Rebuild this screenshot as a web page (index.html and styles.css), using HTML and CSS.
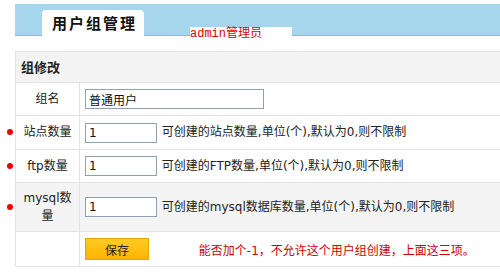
FILE: index.html
```html
<!DOCTYPE html>
<html lang="zh-CN">
<head>
    <meta charset="UTF-8">
    <title>用户组管理</title>
    <link rel="stylesheet" href="styles.css">
</head>
<body>
    <div class="topbar">
        <div class="tab">用户组管理</div>
        <div class="who">admin管理员</div>
    </div>

    <table class="form-table">
        <tr class="head">
            <th colspan="2">组修改</th>
        </tr>
        <tr>
            <td class="label">组名</td>
            <td class="field"><input type="text" class="txt wide" value="普通用户"></td>
        </tr>
        <tr>
            <td class="label req">站点数量</td>
            <td class="field"><input type="text" class="txt" value="1"> 可创建的站点数量,单位(个),默认为0,则不限制</td>
        </tr>
        <tr>
            <td class="label req">ftp数量</td>
            <td class="field"><input type="text" class="txt" value="1"> 可创建的FTP数量,单位(个),默认为0,则不限制</td>
        </tr>
        <tr class="hover">
            <td class="label req">mysql数量</td>
            <td class="field"><input type="text" class="txt" value="1"> 可创建的mysql数据库数量,单位(个),默认为0,则不限制</td>
        </tr>
        <tr>
            <td class="label"></td>
            <td class="field">
                <button class="btn">保存</button>
                <span class="note">能否加个-1，不允许这个用户组创建，上面这三项。</span>
            </td>
        </tr>
    </table>
</body>
</html>
```

FILE: styles.css
```css
html, body {
    overflow: hidden;
}
body {
    margin: 0;
    font-family: "DejaVu Sans", "Noto Sans CJK SC", sans-serif;
    font-size: 12px;
    color: #222;
    background: #fff;
}
.topbar {
    margin: 4px 0 0 15px;
    height: 31px;
    background: #a6d6ec;
    border-bottom: 1px solid #86bfd9;
    display: flex;
    align-items: flex-end;
    padding-left: 27px;
}
.tab {
    width: 102px;
    height: 26px;
    margin-bottom: -1px;
    background: #fff;
    border-radius: 4px 4px 0 0;
    font-family: "Noto Sans CJK SC", sans-serif;
    font-size: 15px;
    font-weight: bold;
    letter-spacing: 2px;
    line-height: 26px;
    text-indent: 10px;
    color: #111;
}
.who {
    width: 102px;
    height: 9px;
    margin: 0 0 -1px 46px;
    padding-top: 1px;
    box-sizing: border-box;
    background: #fff;
    color: #d00;
    font-family: "Liberation Mono", "Noto Sans CJK SC", monospace;
    font-size: 12px;
    line-height: 12px;
    white-space: nowrap;
}
.form-table {
    margin: 15px 0 0 15px;
    width: calc(100% - 15px);
    border-collapse: collapse;
}
.form-table th, .form-table td {
    border: 1px solid #e3e3e3;
}
.form-table th, .form-table .field {
    border-right: 0;
}
.head th {
    background: #f3f3f3;
    text-align: left;
    font-family: "Noto Sans CJK SC", sans-serif;
    font-size: 13px;
    font-weight: bold;
    padding: 7px 5px;
    height: 16px;
    line-height: 16px;
}
.label {
    width: 53px;
    padding: 6px 5px;
    text-align: center;
    line-height: 18px;
    position: relative;
}
.req::before {
    content: "";
    position: absolute;
    left: -9px;
    top: 50%;
    width: 6px;
    height: 6px;
    margin-top: -3px;
    border-radius: 50%;
    background: #e00;
}
.field {
    padding: 6px 5px;
    white-space: nowrap;
}
.hover td {
    background: #f4f4f4;
}
.txt {
    width: 72px;
    height: 20px;
    box-sizing: border-box;
    border: 1px solid #8d9fb2;
    padding: 1px 3px;
    font: inherit;
    color: #111;
    vertical-align: middle;
    margin: 0 1px 0 0;
}
.txt.wide {
    width: 179px;
}
.btn {
    width: 64px;
    height: 22px;
    border: 1px solid #e9a400;
    background: linear-gradient(#ffcc22, #ffb300);
    font: inherit;
    color: #222;
    vertical-align: middle;
    cursor: pointer;
}
.note {
    margin-left: 46px;
    color: #cc0000;
    vertical-align: middle;
}
```
